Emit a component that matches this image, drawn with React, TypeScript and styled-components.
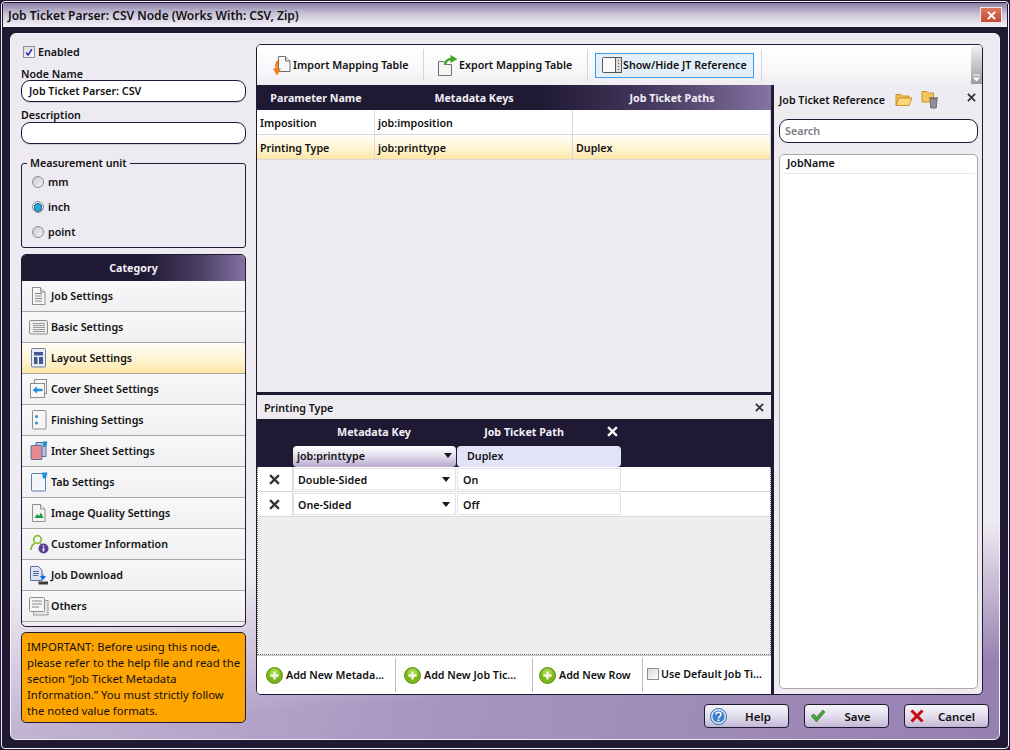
import React from 'react';
import styled, { createGlobalStyle } from 'styled-components';

const GlobalStyle = createGlobalStyle`
  html, body {
    margin: 0;
    padding: 0;
    background: #1f1933;
  }
  * {
    box-sizing: border-box;
  }
  body {
    font-family: "Noto Sans", "Open Sans", sans-serif;
    font-size: 10.7px;
    font-weight: 600;
    color: #111;
  }
`;

const darkBar = 'linear-gradient(90deg, #1f1933 0%, #1f1933 55%, #4b3f65 80%, #8573a3 100%)';
const hotRow = 'linear-gradient(180deg, #fffdf6 0%, #fff3cf 60%, #fde5a6 100%)';

const Frame = styled.div`
  width: 1010px;
  height: 750px;
  padding: 1px;
  background: #1f1933;
  overflow: hidden;
`;

const Outline = styled.div`
  width: 100%;
  height: 100%;
  display: flex;
  flex-direction: column;
  border: 1px solid #f4f2f7;
  border-radius: 4px;
  padding: 1px;
  background: #1f1933;
`;

const TitleBar = styled.div`
  height: 24px;
  flex: none;
  display: flex;
  align-items: center;
  justify-content: space-between;
  padding: 0 5px 0 5px;
  background: linear-gradient(180deg, #8a7fa6 0%, #c9c3d8 45%, #f4f2f8 100%);
  font-size: 12px;
`;

const CloseBox = styled.div`
  width: 22px;
  height: 16px;
  display: flex;
  align-items: center;
  justify-content: center;
  background: linear-gradient(180deg, #e0765f 0%, #c14a33 100%);
  border: 1px solid #efe7e7;
`;

const Body = styled.div`
  flex: 1;
  padding: 6px 7px 7px 7px;
  min-height: 0;
`;

const Sheet = styled.div`
  height: 100%;
  display: flex;
  gap: 10px;
  padding: 10px 10px 0 10px;
  border: 1px solid #f5f3f8;
  border-radius: 6px;
  background:
    linear-gradient(176deg, rgba(238, 234, 241, 1) 0%, rgba(238, 234, 241, 1) 72%, rgba(238, 234, 241, 0) 90%),
    linear-gradient(100deg, #c9bed8 0%, #a794c0 50%, #9680b0 100%);
`;

const LeftCol = styled.div`
  width: 225px;
  flex: none;
  display: flex;
  flex-direction: column;
`;

const RightCol = styled.div`
  flex: 1;
  min-width: 0;
  display: flex;
  flex-direction: column;
`;

const Check = styled.span`
  width: 12px;
  height: 12px;
  flex: none;
  display: inline-flex;
  align-items: center;
  justify-content: center;
  border: 1px solid #8f8f9a;
  background: linear-gradient(135deg, #d9d9de, #fdfdfd);
`;

const EnabledRow = styled.label`
  display: flex;
  flex: none;
  align-items: center;
  gap: 3px;
  height: 14px;
  margin: 1px 0 0 2px;
`;

const FieldLabel = styled.div<{ $top: number; $nudge?: number }>`
  height: 13px;
  flex: none;
  line-height: 13px;
  margin-top: ${({ $top }) => $top}px;
  padding-top: ${({ $nudge }) => $nudge ?? 0}px;
`;

const Rounded = styled.div`
  height: 22px;
  flex: none;
  border: 1px solid #1f1933;
  border-radius: 9px;
  background: #fff;
  line-height: 21px;
  padding-left: 7px;
  box-shadow: 0 1px 0 #cfcad8;
`;

const Group = styled.fieldset`
  margin: 12px 0 6px 0;
  padding: 0 0 0 10px;
  height: 92px;
  flex: none;
  border: 1px solid #1f1933;
  border-radius: 3px;
  display: flex;
  flex-direction: column;
  legend {
    padding: 0 3px;
    margin: 0 0 -1px -5px;
    line-height: 14px;
  }
`;

const RadioRow = styled.label`
  height: 25px;
  flex: none;
  display: flex;
  align-items: center;
  gap: 4px;
`;

const Radio = styled.span<{ $on?: boolean }>`
  width: 12px;
  height: 12px;
  border-radius: 50%;
  border: 1px solid #8d8d96;
  background: ${({ $on }) =>
    $on
      ? 'radial-gradient(circle at 50% 55%, #2aa6d8 0 3px, #125f88 4px, #e8e8ec 4.5px)'
      : 'linear-gradient(135deg, #c9c9ce, #f4f4f6)'};
`;

const Category = styled.div`
  height: 373px;
  flex: none;
  border: 1px solid #1f1933;
  border-radius: 5px;
  background: linear-gradient(180deg, #f6f6f8 0%, #f0eef2 100%);
  overflow: hidden;
`;

const CategoryHead = styled.div`
  height: 26px;
  background: ${darkBar};
  color: #f2f0f6;
  font-weight: 700;
  display: flex;
  align-items: center;
  justify-content: center;
`;

const CategoryRow = styled.div<{ $on?: boolean }>`
  height: 31px;
  display: flex;
  align-items: center;
  gap: 2px;
  padding-left: 7px;
  border-bottom: 1px solid #a6a6a8;
  background: ${({ $on }) => ($on ? hotRow : 'linear-gradient(180deg, #f8f8f9, #f0f0f2)')};
`;

const IconSlot = styled.span`
  width: 20px;
  height: 20px;
  flex: none;
  display: inline-flex;
`;

const Note = styled.div`
  margin-top: 5px;
  height: 91px;
  flex: none;
  background: #ffa500;
  border: 1px solid #1f1933;
  border-radius: 5px;
  padding: 6px 4px 0 5px;
  font-size: 11.3px;
  line-height: 16px;
  font-weight: 400;
  white-space: nowrap;
`;

const MainPanel = styled.div`
  width: 727px;
  height: 651px;
  flex: none;
  display: flex;
  flex-direction: column;
  border: 1px solid #1f1933;
  border-radius: 5px;
  background: #eeecf0;
  overflow: hidden;
`;

const Toolbar = styled.div`
  height: 40px;
  flex: none;
  display: flex;
  align-items: center;
  background: linear-gradient(180deg, #ffffff 0%, #f8f7f9 60%, #efedf1 100%);
`;

const ToolButton = styled.div<{ $w: number; $on?: boolean; $left?: number }>`
  width: ${({ $w }) => $w}px;
  height: 25px;
  flex: none;
  display: flex;
  align-items: center;
  gap: 1px;
  padding-left: ${({ $left }) => $left ?? 7}px;
  border: 1px solid ${({ $on }) => ($on ? '#3a9cf0' : 'transparent')};
  background: ${({ $on }) => ($on ? '#e3f0fa' : 'transparent')};
`;

const ToolSep = styled.div`
  width: 1px;
  height: 32px;
  flex: none;
  background: #d4d3d6;
  margin: 0 7px;
`;

const ToolGrip = styled.div`
  margin-left: auto;
  width: 11px;
  height: 38px;
  display: flex;
  align-items: flex-end;
  justify-content: center;
  padding-bottom: 2px;
  background: linear-gradient(180deg, #f0f0f0, #9c9c9c);
`;

const Split = styled.div`
  flex: 1;
  display: flex;
  min-height: 0;
`;

const Work = styled.div`
  width: 514px;
  flex: none;
  display: flex;
  flex-direction: column;
`;

const MapTable = styled.div`
  height: 307px;
  flex: none;
`;

const MapHead = styled.div`
  height: 25px;
  display: grid;
  grid-template-columns: 118px 198px 1fr;
  align-items: center;
  text-align: center;
  background: ${darkBar};
  color: #f2f0f6;
  font-weight: 700;
`;

const MapRow = styled.div<{ $on?: boolean }>`
  height: 25px;
  display: grid;
  grid-template-columns: 118px 198px 1fr;
  background: ${({ $on }) => ($on ? hotRow : '#fff')};
  border-bottom: 1px solid #d9d9dc;
`;

const MapCell = styled.div`
  display: flex;
  align-items: center;
  padding: 1px 0 0 3px;
  border-right: 1px solid #d9d9dc;
`;

const Divider = styled.div`
  height: 3px;
  flex: none;
  background: #1f1933;
`;

const DetailTitle = styled.div`
  height: 24px;
  flex: none;
  display: flex;
  align-items: center;
  justify-content: space-between;
  padding: 1px 7px 0 7px;
`;

const DetailHead = styled.div`
  height: 48px;
  flex: none;
  background: #1f1933;
  color: #f2f0f6;
  font-weight: 700;
  display: grid;
  grid-template-columns: 36px 164px 164px;
  grid-template-rows: 27px 21px;
`;

const HeadLabel = styled.div<{ $col: number; $shift?: number }>`
  grid-column: ${({ $col }) => $col};
  position: relative;
  display: flex;
  align-items: center;
  justify-content: center;
  padding: 0 ${({ $shift }) => $shift ?? 2}px 2px 0;
`;

const HeadClose = styled.span`
  position: absolute;
  right: 3px;
  top: 7px;
  display: inline-flex;
`;

const HeadSelect = styled.div`
  grid-column: 2;
  grid-row: 2;
  margin-right: 1px;
  border-radius: 4px;
  display: flex;
  align-items: center;
  justify-content: space-between;
  padding: 0 4px 2px 4px;
  color: #111;
  font-weight: 600;
  background: linear-gradient(180deg, #ffffff 0%, #e5e0ef 45%, #b7a8cf 100%);
`;

const HeadInput = styled.div`
  grid-column: 3;
  grid-row: 2;
  border-radius: 4px;
  display: flex;
  align-items: center;
  padding: 0 0 2px 10px;
  color: #111;
  font-weight: 600;
  background: #e3e3f7;
`;

const DetailArea = styled.div`
  flex: 1;
  min-height: 0;
  border: 1px dotted #77767c;
  border-top: none;
  background: #eeeeee;
`;

const ValueRow = styled.div`
  height: 25px;
  display: grid;
  grid-template-columns: 35px 164px 165px 1fr;
  background: #fff;
  border-bottom: 1px solid #d9d9dc;
`;

const RemoveCell = styled.div`
  display: flex;
  align-items: center;
  justify-content: center;
  padding-right: 2px;
  border-right: 1px solid #d9d9dc;
`;

const ValueBox = styled.div<{ $left?: number }>`
  margin: 1px 1px 1px 0;
  padding: 1px 5px 0 ${({ $left }) => $left ?? 4}px;
  display: flex;
  align-items: center;
  justify-content: space-between;
  border: 1px solid #e2e2e6;
  background: #fff;
`;

const BottomBar = styled.div`
  height: 39px;
  flex: none;
  display: flex;
  background: #fff;
  border-top: 1px solid #c8c8cc;
`;

const BottomItem = styled.div<{ $w: number; $left: number }>`
  width: ${({ $w }) => $w}px;
  flex: none;
  margin: 2px 0;
  padding-left: ${({ $left }) => $left}px;
  display: flex;
  align-items: center;
  gap: 3px;
  border-right: 1px solid #bdbdc2;
`;

const DefaultItem = styled.div`
  flex: 1;
  display: flex;
  align-items: center;
  gap: 2px;
  padding: 0 0 2px 4px;
`;

const RefPanel = styled.div`
  flex: 1;
  min-width: 0;
  border-left: 3px solid #1f1933;
  padding: 0 4px 5px 5px;
  display: flex;
  flex-direction: column;
`;

const RefHead = styled.div`
  height: 28px;
  flex: none;
  display: flex;
  align-items: center;
  gap: 8px;
  padding-top: 2px;
`;

const RefFolders = styled.span`
  margin-left: 2px;
  display: inline-flex;
  align-items: center;
  gap: 8px;
  margin-top: -2px;
`;

const RefClose = styled.span`
  margin: 0 2px 6px auto;
  display: inline-flex;
`;

const SearchBox = styled.div`
  height: 24px;
  flex: none;
  margin-top: 6px;
  border: 1px solid #1f1933;
  border-radius: 9px;
  background: #fff;
  color: #7c7c82;
  padding-left: 5px;
  line-height: 22px;
`;

const RefList = styled.div`
  flex: 1;
  margin-top: 11px;
  border: 1px solid #a8a8ae;
  border-radius: 5px;
  background: #fff;
  padding: 0 2px;
`;

const RefItem = styled.div`
  height: 19px;
  line-height: 17px;
  padding-left: 5px;
  border-bottom: 1px solid #e8e8ea;
`;

const Footer = styled.div`
  flex: 1;
  display: flex;
  justify-content: flex-end;
  gap: 15px;
  padding-top: 9px;
`;

const FootButton = styled.div`
  width: 85px;
  height: 24px;
  border: 1px solid #1f1933;
  border-radius: 4px;
  background: linear-gradient(180deg, #f6f4f9 0%, #e3deec 50%, #c3b7d8 100%);
  display: flex;
  align-items: center;
  padding: 0 5px;
  font-size: 11.5px;
  span {
    flex: 1;
    text-align: center;
    padding-left: 6px;
  }
`;

// small page-sheet shape used by most category icons
const Sheet20: React.FC<{ children?: React.ReactNode; fill?: string }> = ({ children, fill = '#f5f5f5' }) => (
  <svg width="20" height="20" viewBox="0 0 20 20">
    <path d="M3.5 1.5h8l4.5 4.5v12.5h-12.5z" fill={fill} stroke="#8e8e8e" />
    <path d="M11.5 1.5v4.5h4.5" fill="#e6e6e6" stroke="#8e8e8e" />
    {children}
  </svg>
);

const categoryIcons: Record<string, React.ReactNode> = {
  job: (
    <Sheet20>
      <path d="M6 7.5h7M6 10h7M6 12.5h7M6 15h7" stroke="#8a8a8a" />
    </Sheet20>
  ),
  basic: (
    <svg width="20" height="20" viewBox="0 0 20 20">
      <rect x="0.5" y="3.5" width="18" height="13.5" rx="1" fill="#eee" stroke="#8e8e8e" />
      <path d="M4 6.5h12M4 8.5h12M4 10.5h12M4 12.5h12M4 14.5h12" stroke="#9a9a9a" />
    </svg>
  ),
  layout: (
    <svg width="20" height="20" viewBox="0 0 20 20">
      <rect x="2.5" y="0.5" width="14" height="18.5" rx="1" fill="#e8ecf6" stroke="#6d7fa8" />
      <path d="M5 4h9v3.5H5zM5 9h3.5v7H5zM10 9h4v7h-4z" fill="#3f5a8f" />
    </svg>
  ),
  cover: (
    <svg width="20" height="20" viewBox="0 0 20 20">
      <rect x="5.5" y="0.5" width="12" height="14" fill="#f4f4f4" stroke="#8e8e8e" />
      <rect x="1.5" y="4.5" width="14" height="14" fill="#f7f7f7" stroke="#8e8e8e" />
      <path d="M3.5 11l4.5-3.5v2.2h5.5v2.6H8v2.2z" fill="#1d8ee0" />
    </svg>
  ),
  finishing: (
    <svg width="20" height="20" viewBox="0 0 20 20">
      <rect x="3.5" y="0.5" width="13.5" height="18.5" rx="1" fill="#f6f6f6" stroke="#8e8e8e" />
      <circle cx="7.5" cy="6.5" r="1.6" fill="#2a97d8" />
      <circle cx="7.5" cy="13" r="1.6" fill="#2a97d8" />
    </svg>
  ),
  inter: (
    <svg width="20" height="20" viewBox="0 0 20 20">
      <path d="M7 1.5h10v14H7z" fill="#b9c7e2" stroke="#5a6f9c" />
      <path d="M14 0.5h4.5l-2 5.5H14z" fill="#1e90d6" />
      <rect x="2" y="4.5" width="11" height="14" rx="1" fill="#e58b92" stroke="#5a6f9c" />
    </svg>
  ),
  tab: (
    <svg width="20" height="20" viewBox="0 0 20 20">
      <rect x="2.5" y="1.5" width="14" height="17.5" rx="1" fill="#f3f5fb" stroke="#5a7fb0" />
      <path d="M13 0.5h5.5l-1.6 6H14z" fill="#1e90d6" />
    </svg>
  ),
  image: (
    <Sheet20>
      <path d="M5.5 15l2.5-4 2 2 2-3.5 2.5 5.5z" fill="#1f9c3c" />
    </Sheet20>
  ),
  customer: (
    <svg width="20" height="20" viewBox="0 0 20 20">
      <circle cx="8.5" cy="5.5" r="3.8" fill="none" stroke="#8cbf3a" strokeWidth="1.8" />
      <path d="M6 9c-2.5 1.5-4 4-4 7M11 9.5c1 .5 1.5 1 2 2" fill="none" stroke="#8cbf3a" strokeWidth="1.8" />
      <circle cx="14.5" cy="14.5" r="5" fill="#5a3d94" />
      <path d="M14.5 11.5v1.2M14.5 13.8v3.6" stroke="#fff" strokeWidth="1.6" />
    </svg>
  ),
  download: (
    <svg width="20" height="20" viewBox="0 0 20 20">
      <path d="M1.5 1.5h8l3.5 3.5v10.5H1.5z" fill="#dce4f4" stroke="#5a6f9c" />
      <path d="M4 6.5h6M4 8.5h6M4 10.5h5" stroke="#4d6aa5" />
      <path d="M14 9v4M11.6 11.5l2.4 3 2.4-3z" fill="#1170e8" stroke="#1170e8" />
      <rect x="9.5" y="16.5" width="9.5" height="3" fill="#3a3a3e" />
    </svg>
  ),
  others: (
    <svg width="20" height="20" viewBox="0 0 20 20">
      <rect x="4.5" y="4.5" width="14.5" height="14.5" fill="#e4e4e4" stroke="#9a9a9a" />
      <rect x="0.5" y="1.5" width="15" height="14" rx="1" fill="#f6f6f6" stroke="#8e8e8e" />
      <path d="M3 5h10M3 8h10M3 11h7" stroke="#8a8a8a" />
    </svg>
  ),
};

const categories = [
  { label: 'Job Settings', icon: 'job' },
  { label: 'Basic Settings', icon: 'basic' },
  { label: 'Layout Settings', icon: 'layout', on: true },
  { label: 'Cover Sheet Settings', icon: 'cover' },
  { label: 'Finishing Settings', icon: 'finishing' },
  { label: 'Inter Sheet Settings', icon: 'inter' },
  { label: 'Tab Settings', icon: 'tab' },
  { label: 'Image Quality Settings', icon: 'image' },
  { label: 'Customer Information', icon: 'customer' },
  { label: 'Job Download', icon: 'download' },
  { label: 'Others', icon: 'others' },
];

const Cross: React.FC<{ size?: number; color?: string; width?: number }> = ({ size = 10, color = '#333', width = 2 }) => (
  <svg width={size} height={size} viewBox="0 0 10 10">
    <path d="M1 1l8 8M9 1l-8 8" stroke={color} strokeWidth={width} />
  </svg>
);

const Caret: React.FC = () => (
  <svg width="8" height="5" viewBox="0 0 8 5">
    <path d="M0 0h8L4 5z" fill="#1a1a1a" />
  </svg>
);

const GripMark: React.FC = () => (
  <svg width="9" height="8" viewBox="0 0 9 8">
    <path d="M1 1h7" stroke="#fff" />
    <path d="M1 3.5h7L4.5 7.5z" fill="#fff" />
  </svg>
);

const PlusCircle: React.FC = () => (
  <svg width="17" height="17" viewBox="0 0 17 17">
    <circle cx="8.5" cy="8.5" r="8" fill="#7ab51d" stroke="#5d9410" />
    <circle cx="8.5" cy="6.5" r="5" fill="#a2d142" />
    <path d="M8.5 4.5v8M4.5 8.5h8" stroke="#f4f8e4" strokeWidth="2.4" />
  </svg>
);

const Tick: React.FC = () => (
  <svg width="12" height="12" viewBox="0 0 12 12">
    <path d="M2.5 6.5l2.5 3 4.5-7" fill="none" stroke="#2b2bb0" strokeWidth="2" />
  </svg>
);

const Folder: React.FC = () => (
  <svg width="18" height="15" viewBox="0 0 18 15">
    <path d="M1 2.5h5l1.5 1.5h6.5v2H4L1 13z" fill="#f2c14e" stroke="#c9962a" />
    <path d="M4 6h13l-3 7.5H1z" fill="#fbd77a" stroke="#c9962a" />
  </svg>
);

const FolderTrash: React.FC = () => (
  <svg width="18" height="19" viewBox="0 0 18 19">
    <path d="M1 1.5h5l1.5 1.5h5v9H1z" fill="#f4c75a" stroke="#c9962a" />
    <path d="M9 9h7l-.8 9H9.8z" fill="#8f8f94" stroke="#6e6e72" />
    <path d="M8 8h9" stroke="#6e6e72" strokeWidth="1.4" />
  </svg>
);

const ImportIcon: React.FC = () => (
  <svg width="19" height="23" viewBox="0 0 19 23">
    <path d="M5.5 2.5h7l4.5 4.5v10.5H5.5z" fill="#f7f7f7" stroke="#6f6f6f" />
    <path d="M12.5 2.5V7H17" fill="#e0e0e0" stroke="#6f6f6f" />
    <path d="M5 7c-2 3-2 6-1 9" fill="none" stroke="#ee7d1e" strokeWidth="2.4" />
    <path d="M0 14.5h8l-4 7z" fill="#ee7d1e" />
  </svg>
);

const ExportIcon: React.FC = () => (
  <svg width="21" height="23" viewBox="0 0 21 23">
    <path d="M1.5 7.5h5l3 3h5v11H1.5z" fill="#f4f4f4" stroke="#6f6f6f" />
    <path d="M8 11c0-4 3-6 7-6" fill="none" stroke="#43a52a" strokeWidth="2.6" />
    <path d="M13.5 1l7 4-7 4z" fill="#43a52a" />
  </svg>
);

const PanelIcon: React.FC = () => (
  <svg width="20" height="18" viewBox="0 0 20 18">
    <rect x="0.5" y="1.5" width="19" height="15" rx="1" fill="#fafafa" stroke="#555" />
    <rect x="13.5" y="1.5" width="6" height="15" fill="#dcdcdc" stroke="#555" />
    <path d="M16.5 4v1M16.5 7v1M16.5 10v1M16.5 13v1" stroke="#555" />
  </svg>
);

const HelpIcon: React.FC = () => (
  <svg width="17" height="17" viewBox="0 0 17 17">
    <circle cx="8.5" cy="8.5" r="8" fill="#dbe8f8" stroke="#2a66ad" />
    <circle cx="8.5" cy="8.5" r="6" fill="#3f7fc6" />
    <path d="M6 6.5c0-3 5-3 5 0 0 2-2.5 2-2.5 4" fill="none" stroke="#fff" strokeWidth="1.6" />
    <rect x="7.6" y="11.5" width="1.8" height="1.8" fill="#fff" />
  </svg>
);

const SaveIcon: React.FC = () => (
  <svg width="16" height="14" viewBox="0 0 16 14">
    <path d="M1 7l3-2 2.5 3L13 1l2 2-8.5 10z" fill="#46a040" stroke="#2f7a2f" strokeWidth="0.6" />
  </svg>
);

const CancelIcon: React.FC = () => (
  <svg width="14" height="14" viewBox="0 0 14 14">
    <path d="M1.5 1.5l11 11M12.5 1.5l-11 11" stroke="#c60c0c" strokeWidth="3" />
  </svg>
);

const App: React.FC = () => {
  return (
    <Frame>
      <GlobalStyle />
      <Outline>
        <TitleBar>
          <span>Job Ticket Parser: CSV Node (Works With: CSV, Zip)</span>
          <CloseBox>
            <Cross size={9} color="#fff" width={2.2} />
          </CloseBox>
        </TitleBar>
        <Body>
          <Sheet>
            <LeftCol>
              <EnabledRow>
                <Check>
                  <Tick />
                </Check>
                Enabled
              </EnabledRow>
              <FieldLabel $top={8} $nudge={1}>
                Node Name
              </FieldLabel>
              <Rounded>Job Ticket Parser: CSV</Rounded>
              <FieldLabel $top={7}>Description</FieldLabel>
              <Rounded />
              <Group>
                <legend>Measurement unit</legend>
                <RadioRow>
                  <Radio />
                  mm
                </RadioRow>
                <RadioRow>
                  <Radio $on />
                  inch
                </RadioRow>
                <RadioRow>
                  <Radio />
                  point
                </RadioRow>
              </Group>
              <Category>
                <CategoryHead>Category</CategoryHead>
                {categories.map((c) => (
                  <CategoryRow key={c.label} $on={c.on}>
                    <IconSlot>{categoryIcons[c.icon]}</IconSlot>
                    {c.label}
                  </CategoryRow>
                ))}
              </Category>
              <Note>
                IMPORTANT: Before using this node,
                <br />
                please refer to the help file and read the
                <br />
                section “Job Ticket Metadata
                <br />
                Information.” You must strictly follow
                <br />
                the noted value formats.
              </Note>
            </LeftCol>
            <RightCol>
              <MainPanel>
                <Toolbar>
                  <ToolButton $w={151} $left={7} style={{ marginLeft: 8 }}>
                    <ImportIcon />
                    Import Mapping Table
                  </ToolButton>
                  <ToolSep />
                  <ToolButton $w={149} $left={5}>
                    <ExportIcon />
                    Export Mapping Table
                  </ToolButton>
                  <ToolSep />
                  <ToolButton $w={159} $on $left={6}>
                    <PanelIcon />
                    Show/Hide JT Reference
                  </ToolButton>
                  <ToolSep />
                  <ToolGrip>
                    <GripMark />
                  </ToolGrip>
                </Toolbar>
                <Split>
                  <Work>
                    <MapTable>
                      <MapHead>
                        <div>Parameter Name</div>
                        <div>Metadata Keys</div>
                        <div>Job Ticket Paths</div>
                      </MapHead>
                      <MapRow>
                        <MapCell>Imposition</MapCell>
                        <MapCell>job:imposition</MapCell>
                        <MapCell />
                      </MapRow>
                      <MapRow $on>
                        <MapCell>Printing Type</MapCell>
                        <MapCell>job:printtype</MapCell>
                        <MapCell>Duplex</MapCell>
                      </MapRow>
                    </MapTable>
                    <Divider />
                    <DetailTitle>
                      Printing Type
                      <Cross size={9} />
                    </DetailTitle>
                    <DetailHead>
                      <HeadLabel $col={2}>Metadata Key</HeadLabel>
                      <HeadLabel $col={3} $shift={30}>
                        Job Ticket Path
                        <HeadClose>
                          <Cross size={11} color="#f4f4f4" width={2.2} />
                        </HeadClose>
                      </HeadLabel>
                      <HeadSelect>
                        job:printtype
                        <Caret />
                      </HeadSelect>
                      <HeadInput>Duplex</HeadInput>
                    </DetailHead>
                    <DetailArea>
                      <ValueRow>
                        <RemoveCell>
                          <Cross size={11} />
                        </RemoveCell>
                        <ValueBox>
                          Double-Sided
                          <Caret />
                        </ValueBox>
                        <ValueBox $left={5}>On</ValueBox>
                        <div />
                      </ValueRow>
                      <ValueRow>
                        <RemoveCell>
                          <Cross size={11} />
                        </RemoveCell>
                        <ValueBox>
                          One-Sided
                          <Caret />
                        </ValueBox>
                        <ValueBox $left={5}>Off</ValueBox>
                        <div />
                      </ValueRow>
                    </DetailArea>
                    <BottomBar>
                      <BottomItem $w={139} $left={9}>
                        <PlusCircle />
                        Add New Metada...
                      </BottomItem>
                      <BottomItem $w={137} $left={8}>
                        <PlusCircle />
                        Add New Job Tic...
                      </BottomItem>
                      <BottomItem $w={110} $left={6}>
                        <PlusCircle />
                        Add New Row
                      </BottomItem>
                      <DefaultItem>
                        <Check />
                        Use Default Job Ti...
                      </DefaultItem>
                    </BottomBar>
                  </Work>
                  <RefPanel>
                    <RefHead>
                      Job Ticket Reference
                      <RefFolders>
                        <Folder />
                        <FolderTrash />
                      </RefFolders>
                      <RefClose>
                        <Cross size={9} />
                      </RefClose>
                    </RefHead>
                    <SearchBox>Search</SearchBox>
                    <RefList>
                      <RefItem>JobName</RefItem>
                    </RefList>
                  </RefPanel>
                </Split>
              </MainPanel>
              <Footer>
                <FootButton>
                  <HelpIcon />
                  <span>Help</span>
                </FootButton>
                <FootButton>
                  <SaveIcon />
                  <span>Save</span>
                </FootButton>
                <FootButton>
                  <CancelIcon />
                  <span>Cancel</span>
                </FootButton>
              </Footer>
            </RightCol>
          </Sheet>
        </Body>
      </Outline>
    </Frame>
  );
};

export default App;
